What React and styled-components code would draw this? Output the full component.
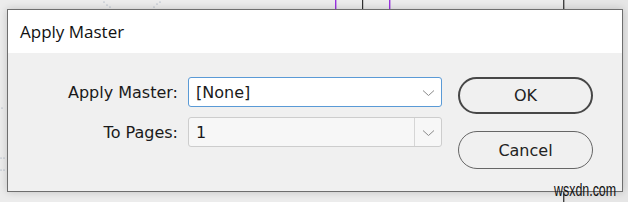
import React from "react";
import styled, { createGlobalStyle } from "styled-components";

const GlobalStyle = createGlobalStyle`
  html, body {
    margin: 0;
    padding: 0;
    background: #ececec;
  }
`;

const Chevron = () => (
  <svg width="13" height="8" viewBox="0 0 13 8">
    <path d="M1 1.5 L6.5 6.5 L12 1.5" fill="none" stroke="#8a8a8a" strokeWidth="1" />
  </svg>
);

const Backdrop = () => (
  <BackdropSvg width="628" height="202" viewBox="0 0 628 202">
    <rect x="563" y="0" width="65" height="202" fill="#e6e6e6" />
    <rect x="335" y="0" width="1.4" height="12" fill="#9a33e0" />
    <rect x="362" y="0" width="1.2" height="12" fill="#333" />
    <rect x="389" y="0" width="1.4" height="12" fill="#9a33e0" />
    <rect x="563" y="0" width="1.4" height="202" fill="#444" />
    <g fill="#8c9bb0">
      <circle cx="104" cy="2" r="0.6" />
      <circle cx="107" cy="5" r="0.6" />
      <circle cx="110" cy="7" r="0.6" />
      <circle cx="154" cy="7" r="0.6" />
      <circle cx="157" cy="4" r="0.6" />
      <circle cx="160" cy="2" r="0.6" />
      <circle cx="2" cy="108" r="0.6" />
      <circle cx="1" cy="158" r="0.6" />
      <circle cx="4" cy="158" r="0.6" />
      <circle cx="1" cy="170" r="0.6" />
      <circle cx="4" cy="170" r="0.6" />
    </g>
  </BackdropSvg>
);

export default function App() {
  return (
    <>
      <GlobalStyle />
      <Stage>
        <Backdrop />
        <Dialog>
          <TitleBar>Apply Master</TitleBar>
          <Body>
            <Form>
              <Label>Apply Master:</Label>
              <Select focused>
                <SelectText>[None]</SelectText>
                <ArrowArea>
                  <Chevron />
                </ArrowArea>
              </Select>
              <Label>To Pages:</Label>
              <Select>
                <SelectText>1</SelectText>
                <ArrowArea divided>
                  <Chevron />
                </ArrowArea>
              </Select>
            </Form>
            <Buttons>
              <Button primary>OK</Button>
              <Button>Cancel</Button>
            </Buttons>
          </Body>
        </Dialog>
        <Watermark>wsxdn.com</Watermark>
      </Stage>
    </>
  );
}

const Stage = styled.div`
  position: relative;
  width: 628px;
  height: 202px;
  overflow: hidden;
  box-sizing: border-box;
  padding: 9px 0 0 7px;
  background: #ececec;
`;

const BackdropSvg = styled.svg`
  position: absolute;
  left: 0;
  top: 0;
`;

const Dialog = styled.div`
  position: relative;
  width: 616px;
  height: 183px;
  box-sizing: border-box;
  border: 1px solid #6e6e6e;
  background: #f0f0f0;
  box-shadow: 0 0 8px rgba(0, 0, 0, 0.18);
  display: flex;
  flex-direction: column;
`;

const TitleBar = styled.div`
  height: 43px;
  flex-shrink: 0;
  display: flex;
  align-items: center;
  padding-left: 12px;
  background: #ffffff;
  font-family: "Open Sans", "Noto Sans", sans-serif;
  font-size: 17px;
  color: #111;
`;

const Body = styled.div`
  display: flex;
  padding-top: 24px;
`;

const Form = styled.div`
  display: grid;
  grid-template-columns: 170px 254px;
  grid-auto-rows: 30px;
  column-gap: 10px;
  row-gap: 10px;
  align-items: center;
`;

const Label = styled.div`
  text-align: right;
  font-family: "DejaVu Sans", Verdana, sans-serif;
  font-size: 16px;
  color: #1a1a1a;
`;

const Select = styled.div`
  height: 30px;
  box-sizing: border-box;
  display: flex;
  align-items: stretch;
  border: 1px solid ${(p) => (p.focused ? "#5a9ad6" : "#cdcdcd")};
  border-radius: 3px;
  background: ${(p) => (p.focused ? "#ffffff" : "#f7f7f7")};
`;

const SelectText = styled.div`
  flex: 1;
  display: flex;
  align-items: center;
  padding-left: 7px;
  font-family: "DejaVu Sans", Verdana, sans-serif;
  font-size: 16px;
  color: #1a1a1a;
`;

const ArrowArea = styled.div`
  width: 26px;
  display: flex;
  align-items: center;
  justify-content: center;
  border-left: ${(p) => (p.divided ? "1px solid #d6d6d6" : "none")};
  padding-top: 1px;
`;

const Buttons = styled.div`
  display: flex;
  flex-direction: column;
  gap: 17px;
  margin-left: 16px;
`;

const Button = styled.button`
  width: 135px;
  height: ${(p) => (p.primary ? "37px" : "38px")};
  box-sizing: border-box;
  border: ${(p) => (p.primary ? "2.5px solid #474747" : "1px solid #666")};
  border-radius: 19px;
  background: #f0f0f0;
  font-family: "DejaVu Sans", Verdana, sans-serif;
  font-size: 16px;
  color: #222;
  padding: 0;
`;

const Watermark = styled.div`
  position: absolute;
  left: 554px;
  top: 180px;
  font-family: "Liberation Sans", Arial, sans-serif;
  font-size: 18px;
  line-height: 21px;
  color: #111;
  transform: scaleX(0.69);
  transform-origin: left center;
`;
